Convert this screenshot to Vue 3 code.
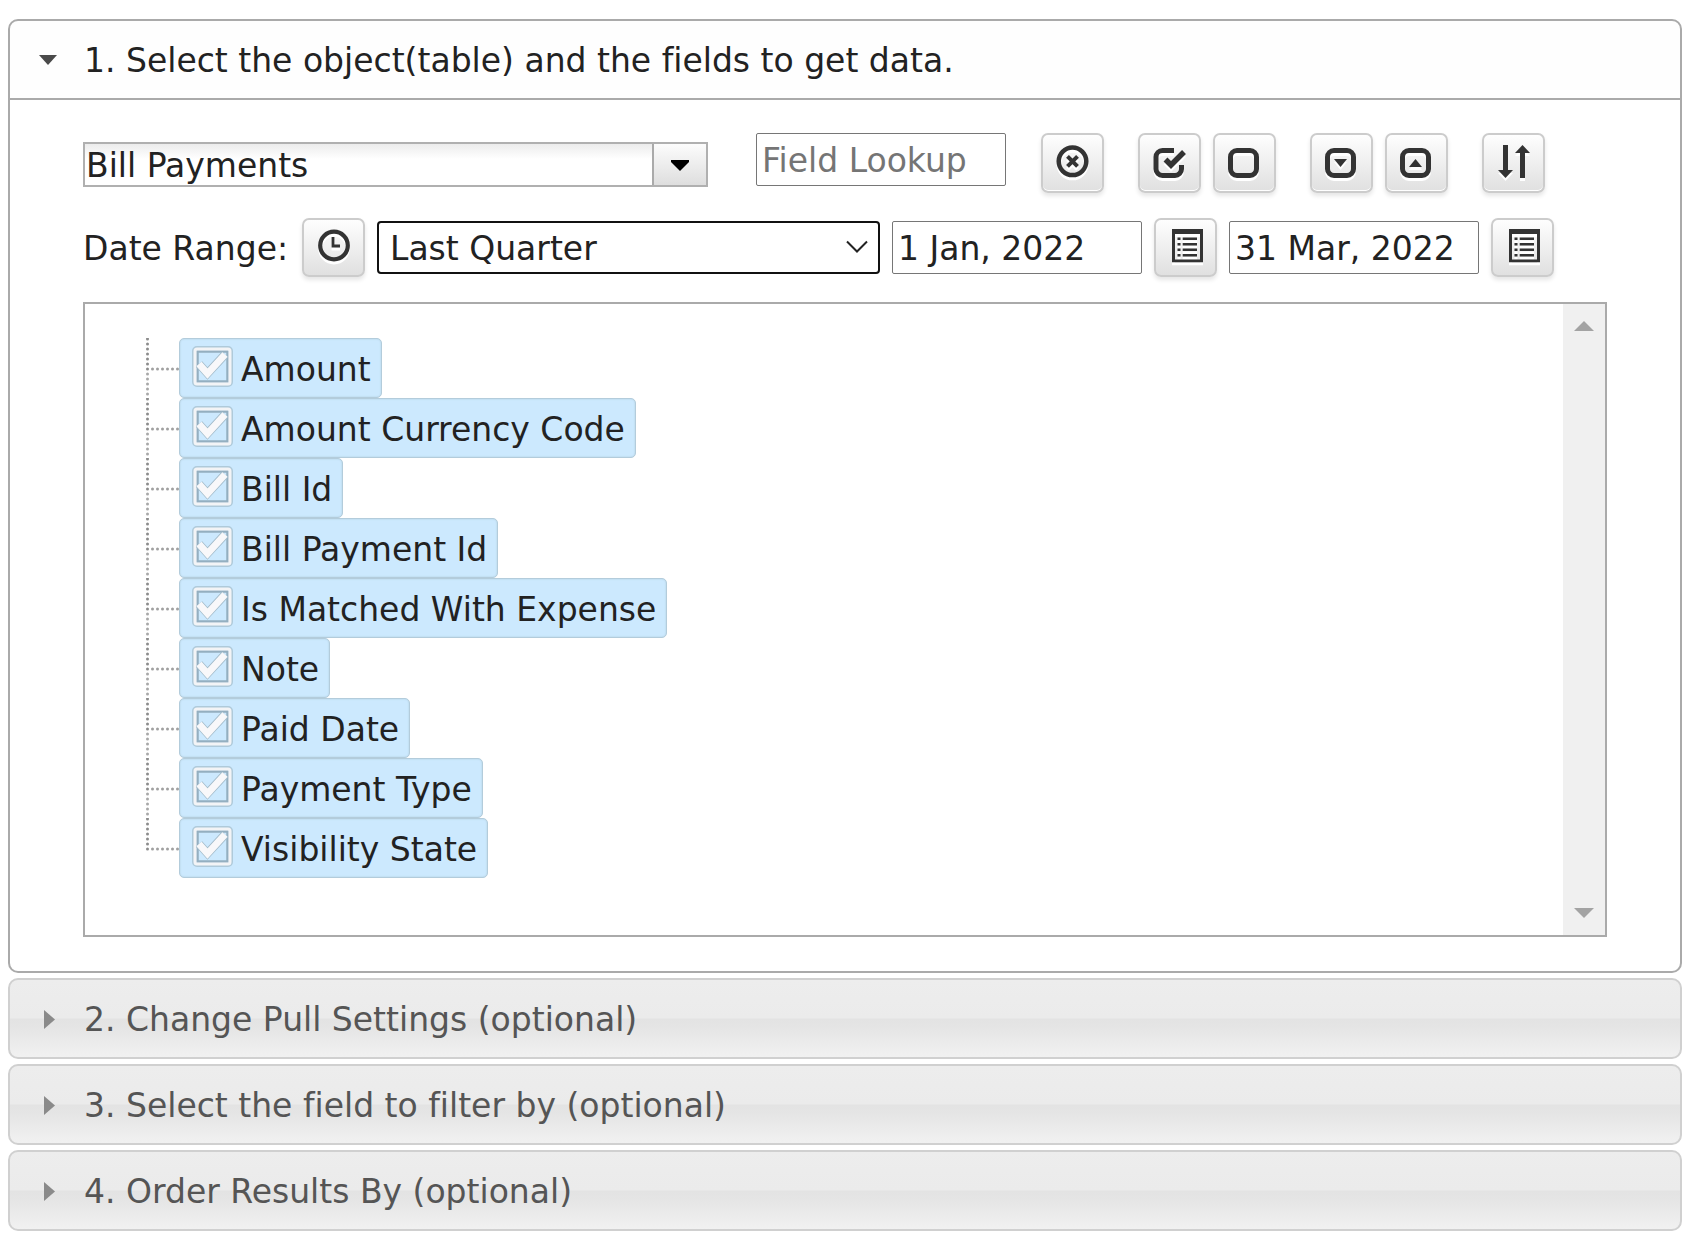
<script setup>
import { ref } from 'vue'

const objectName = ref('Bill Payments')
const lookup = ref('')
const range = ref('Last Quarter')
const startDate = ref('1 Jan, 2022')
const endDate = ref('31 Mar, 2022')

const fields = ref(
  [
    'Amount',
    'Amount Currency Code',
    'Bill Id',
    'Bill Payment Id',
    'Is Matched With Expense',
    'Note',
    'Paid Date',
    'Payment Type',
    'Visibility State',
  ].map((name) => ({ name, checked: true }))
)

const closedSections = [
  '2. Change Pull Settings (optional)',
  '3. Select the field to filter by (optional)',
  '4. Order Results By (optional)',
]

const box = 'M22 15.5H35a6.5 6.5 0 0 1 6.5 6.5V34a6.5 6.5 0 0 1 -6.5 6.5H22a6.5 6.5 0 0 1 -6.5 -6.5V22a6.5 6.5 0 0 1 6.5 -6.5Z'

const toolGroups = [
  [
    {
      label: 'Clear lookup',
      strokes: [
        { d: 'M43.3 26.3a13.8 13.8 0 1 1 -27.6 0a13.8 13.8 0 1 1 27.6 0Z', w: 4.5 },
        { d: 'M24.5 21.3l10 10M34.5 21.3l-10 10', w: 4 },
      ],
    },
  ],
  [
    {
      label: 'Check all',
      strokes: [
        { d: 'M34 15.5H22.5a6.5 6.5 0 0 0 -6.5 6.5V34a6.5 6.5 0 0 0 6.5 6.5H35a6.5 6.5 0 0 0 6.5 -6.5V30', w: 5 },
        { d: 'M25.5 24.5l5.5 5.5L44 17', w: 5.5 },
      ],
    },
    { label: 'Uncheck all', strokes: [{ d: box, w: 5 }] },
  ],
  [
    { label: 'Expand all', strokes: [{ d: box, w: 5 }], fill: 'M22 24h13l-6.5 8z' },
    { label: 'Collapse all', strokes: [{ d: box, w: 5 }], fill: 'M22 32h13l-6.5 -8z' },
  ],
  [
    {
      label: 'Sort fields',
      strokes: [],
      fill: 'M19 10h5v25h5l-7.5 8l-7.5 -8h5zM36 43h5v-25h5l-7.5 -8l-7.5 8h5z',
    },
  ],
]

const listIcon =
  'M16 9h31v33.3h-31zM19 14v25.5h25v-25.5zM21.5 17.5h3v2.6h-3zM26.7 17.5h14.3v2.6h-14.3zM21.5 23h3v2.6h-3zM26.7 23h14.3v2.6h-14.3zM21.5 28.5h3v2.6h-3zM26.7 28.5h14.3v2.6h-14.3zM21.5 34h3v2.6h-3zM26.7 34h14.3v2.6h-14.3z'
</script>

<template>
  <main class="accordion">
    <section class="panel">
      <h3 class="heading">
        <button type="button" class="header open" aria-expanded="true">
          <svg class="marker" viewBox="0 0 20 20" aria-hidden="true"><path d="M1 4h18l-9 10z" fill="#4a4a4a" /></svg>
          <span>1. Select the object(table) and the fields to get data.</span>
        </button>
      </h3>
      <div class="content">
        <div class="row">
          <div class="combo">
            <input v-model="objectName" type="text" class="combo-input" aria-label="Object" />
            <button type="button" class="combo-button" aria-label="Show objects">
              <svg width="18" height="12" viewBox="0 0 18 12" aria-hidden="true"><path d="M0 1h18v2l-9 9l-9 -9z" fill="#000" /></svg>
            </button>
          </div>
          <input v-model="lookup" type="text" class="text-input" placeholder="Field Lookup" aria-label="Field Lookup" />
          <div class="tools">
            <div v-for="(group, g) in toolGroups" :key="g" class="tool-group">
              <button v-for="tool in group" :key="tool.label" type="button" class="tool" :aria-label="tool.label">
                <svg class="glyph" width="59" height="56" viewBox="0 0 59 56" aria-hidden="true">
                  <path v-for="s in tool.strokes" :key="s.d" :d="s.d" fill="none" stroke="#333" :stroke-width="s.w" />
                  <path v-if="tool.fill" :d="tool.fill" fill="#333" />
                </svg>
              </button>
            </div>
          </div>
        </div>

        <div class="row dates">
          <label class="range-label" for="range">Date Range:</label>
          <button type="button" class="tool" aria-label="Refresh range">
            <svg class="glyph" width="59" height="55" viewBox="0 0 59 55" aria-hidden="true">
              <circle cx="30" cy="25.5" r="13.8" fill="none" stroke="#333" stroke-width="4.2" />
              <path d="M29 17v9h7" fill="none" stroke="#333" stroke-width="2.8" />
            </svg>
          </button>
          <div class="select-wrap">
            <select id="range" v-model="range" class="select">
              <option>Last Quarter</option>
            </select>
            <svg class="chevron" width="24" height="14" viewBox="0 0 24 14" aria-hidden="true">
              <path d="M2 1.5l10 10l10 -10" fill="none" stroke="#222" stroke-width="2" />
            </svg>
          </div>
          <input v-model="startDate" type="text" class="text-input" aria-label="Start date" />
          <button type="button" class="tool" aria-label="Pick start date">
            <svg class="glyph" width="59" height="55" viewBox="0 0 59 55" aria-hidden="true"><path :d="listIcon" fill="#333" fill-rule="evenodd" /></svg>
          </button>
          <input v-model="endDate" type="text" class="text-input" aria-label="End date" />
          <button type="button" class="tool" aria-label="Pick end date">
            <svg class="glyph" width="59" height="55" viewBox="0 0 59 55" aria-hidden="true"><path :d="listIcon" fill="#333" fill-rule="evenodd" /></svg>
          </button>
        </div>

        <div class="tree">
          <ul class="fields">
            <li v-for="(field, i) in fields" :key="field.name" class="field">
              <svg class="branch" width="33" height="60" viewBox="0 0 33 60" aria-hidden="true">
                <path d="M1.5 1V31.5" stroke="#8c8c8c" />
                <path v-if="i < fields.length - 1" d="M1.5 36V58" stroke="#a8a8a8" />
                <path d="M6.5 31H33" stroke="#a0a0a0" />
              </svg>
              <label class="field-label">
                <span class="check">
                  <input v-model="field.checked" type="checkbox" class="check-input" />
                  <svg v-if="field.checked" class="check-art" width="41" height="41" viewBox="0 0 41 41" aria-hidden="true">
                    <rect x="1" y="1" width="39" height="39" rx="4" fill="none" stroke="#a3bccb" stroke-width="2" opacity="0.7" />
                    <rect x="5.5" y="5.5" width="30" height="30" fill="none" stroke="#94afc0" stroke-width="2.5" />
                    <rect x="3" y="3" width="35" height="35" rx="2" fill="none" stroke="#f3f4f6" stroke-width="3" />
                    <path d="M7 18l8.500 9.500L33 8.500" fill="none" stroke="#a3bccb" stroke-width="8.5" />
                    <path d="M7 18l8.500 9.500L33 8.500" fill="none" stroke="#f8f8fa" stroke-width="7" />
                  </svg>
                </span>
                <span>{{ field.name }}</span>
              </label>
            </li>
          </ul>
          <div class="scrollbar">
            <button type="button" class="scroll-button" aria-label="Scroll up">
              <svg width="20" height="10" viewBox="0 0 20 10" aria-hidden="true"><path d="M0 10L10 0L20 10z" fill="#a3a3a3" /></svg>
            </button>
            <button type="button" class="scroll-button" aria-label="Scroll down">
              <svg width="20" height="10" viewBox="0 0 20 10" aria-hidden="true"><path d="M0 0L10 10L20 0z" fill="#a3a3a3" /></svg>
            </button>
          </div>
        </div>
      </div>
    </section>

    <h3 v-for="title in closedSections" :key="title" class="heading">
      <button type="button" class="header closed" aria-expanded="false">
        <svg class="marker" viewBox="0 0 20 20" aria-hidden="true"><path d="M6 0l11 9.5L6 19z" fill="#8a8a8a" /></svg>
        <span>{{ title }}</span>
      </button>
    </h3>
  </main>
</template>

<style>
body {
  margin: 0;
  background: #fff;
}
</style>

<style scoped>
.accordion {
  display: flex;
  flex-direction: column;
  gap: 5px;
  padding: 19px 14px 2px 8px;
  color: #222;
  font: 33px/40px "DejaVu Sans", Verdana, sans-serif;
  font-variant-ligatures: none;
}
.accordion * {
  box-sizing: border-box;
}
button,
input,
select {
  margin: 0;
  color: inherit;
  font: inherit;
  font-variant-ligatures: none;
}
svg {
  display: block;
  flex: none;
}
.heading {
  margin: 0;
  font: inherit;
  font-variant-ligatures: none;
}
.header {
  display: flex;
  align-items: center;
  gap: 26px;
  width: 100%;
  height: 81px;
  padding: 2px 28px 0;
  border: 2px solid #d0d0d0;
  border-radius: 10px;
  text-align: left;
  white-space: nowrap;
}
.closed {
  background: linear-gradient(#ededed, #ebebeb 49%, #e3e3e3 51%, #e5e5e5 62%, #f1f1f1);
  color: #555;
}
.open {
  border-color: #aaa;
  border-radius: 10px 10px 0 0;
  background: #fefefe;
  color: #222;
}
.marker {
  width: 20px;
  height: 20px;
}
.content {
  display: flex;
  flex-direction: column;
  gap: 25px;
  padding: 33px 73px 34px;
  border: 2px solid #aaa;
  border-top: 0;
  border-radius: 0 0 10px 10px;
}
.row {
  display: flex;
  align-items: flex-start;
}
.combo {
  display: flex;
  flex: none;
  width: 625px;
  height: 45px;
  margin: 9px 48px 0 0;
  border: 2px solid #b0b0b0;
}
.combo-input {
  flex: 1;
  min-width: 0;
  padding: 2px 1px 0;
  border: 0;
  background: linear-gradient(#ececec, #fff 15px);
}
.combo-button {
  display: flex;
  align-items: center;
  justify-content: center;
  width: 54px;
  padding: 1px 0 0;
  border: 0;
  border-left: 2px solid #aaa;
  background: linear-gradient(#fcfcfc, #dedede);
}
.text-input {
  flex: none;
  width: 250px;
  height: 53px;
  padding: 2px 5px 0;
  border: 1px solid #767676;
  border-radius: 2px;
  background: #fff;
}
.text-input::placeholder {
  color: #757575;
  opacity: 1;
}
.tools {
  display: flex;
  gap: 34px;
  margin-left: 35px;
}
.tool-group {
  display: flex;
  gap: 12px;
}
.tool {
  flex: none;
  width: 63px;
  height: 60px;
  padding: 0;
  border: 2px solid #ccc;
  border-radius: 7px;
  background: linear-gradient(#fefefe, #e0e0e0);
  box-shadow: 0 3px 4px rgba(0, 0, 0, 0.1), inset 0 -1px 0 #fff;
}
.glyph {
  filter: drop-shadow(0 3px 0 #fff);
}
.dates {
  align-items: center;
  gap: 12px;
}
.dates .tool {
  height: 59px;
  box-shadow: 0 3px 4px rgba(0, 0, 0, 0.1);
}
.range-label {
  flex: none;
  width: 207px;
  padding-top: 2px;
  white-space: nowrap;
}
.select-wrap {
  position: relative;
  flex: none;
  width: 503px;
}
.select {
  display: block;
  width: 100%;
  height: 53px;
  padding: 2px 11px 0;
  border: 2px solid #111;
  border-radius: 4px;
  background: #fff;
  appearance: none;
}
.chevron {
  position: absolute;
  top: 19px;
  right: 11px;
  pointer-events: none;
}
.tree {
  display: flex;
  justify-content: space-between;
  border: 2px solid #aaa;
}
.fields {
  margin: 0;
  padding: 34px 0 57px 61px;
  list-style: none;
}
.field {
  display: flex;
  height: 60px;
}
.branch path {
  fill: none;
  stroke-width: 3;
  stroke-linecap: round;
  stroke-dasharray: 0 5;
}
.field-label {
  display: flex;
  align-items: center;
  gap: 8px;
  padding: 4px 10px 0 12px;
  border: 1px solid #b3ccdb;
  border-radius: 5px;
  background: #cce9fe;
  box-shadow: inset 0 0 2px #b0cbda;
  white-space: nowrap;
}
.check {
  position: relative;
  width: 41px;
  height: 41px;
  margin-bottom: 7px;
}
.check-input {
  display: block;
  width: 41px;
  height: 41px;
  appearance: none;
}
.check-art {
  position: absolute;
  inset: 0;
  pointer-events: none;
}
.scrollbar {
  display: flex;
  flex-direction: column;
  justify-content: space-between;
  width: 42px;
  background: #f0f0f0;
}
.scroll-button {
  display: flex;
  align-items: center;
  justify-content: center;
  height: 44px;
  padding: 0;
  border: 0;
  background: none;
}
</style>
